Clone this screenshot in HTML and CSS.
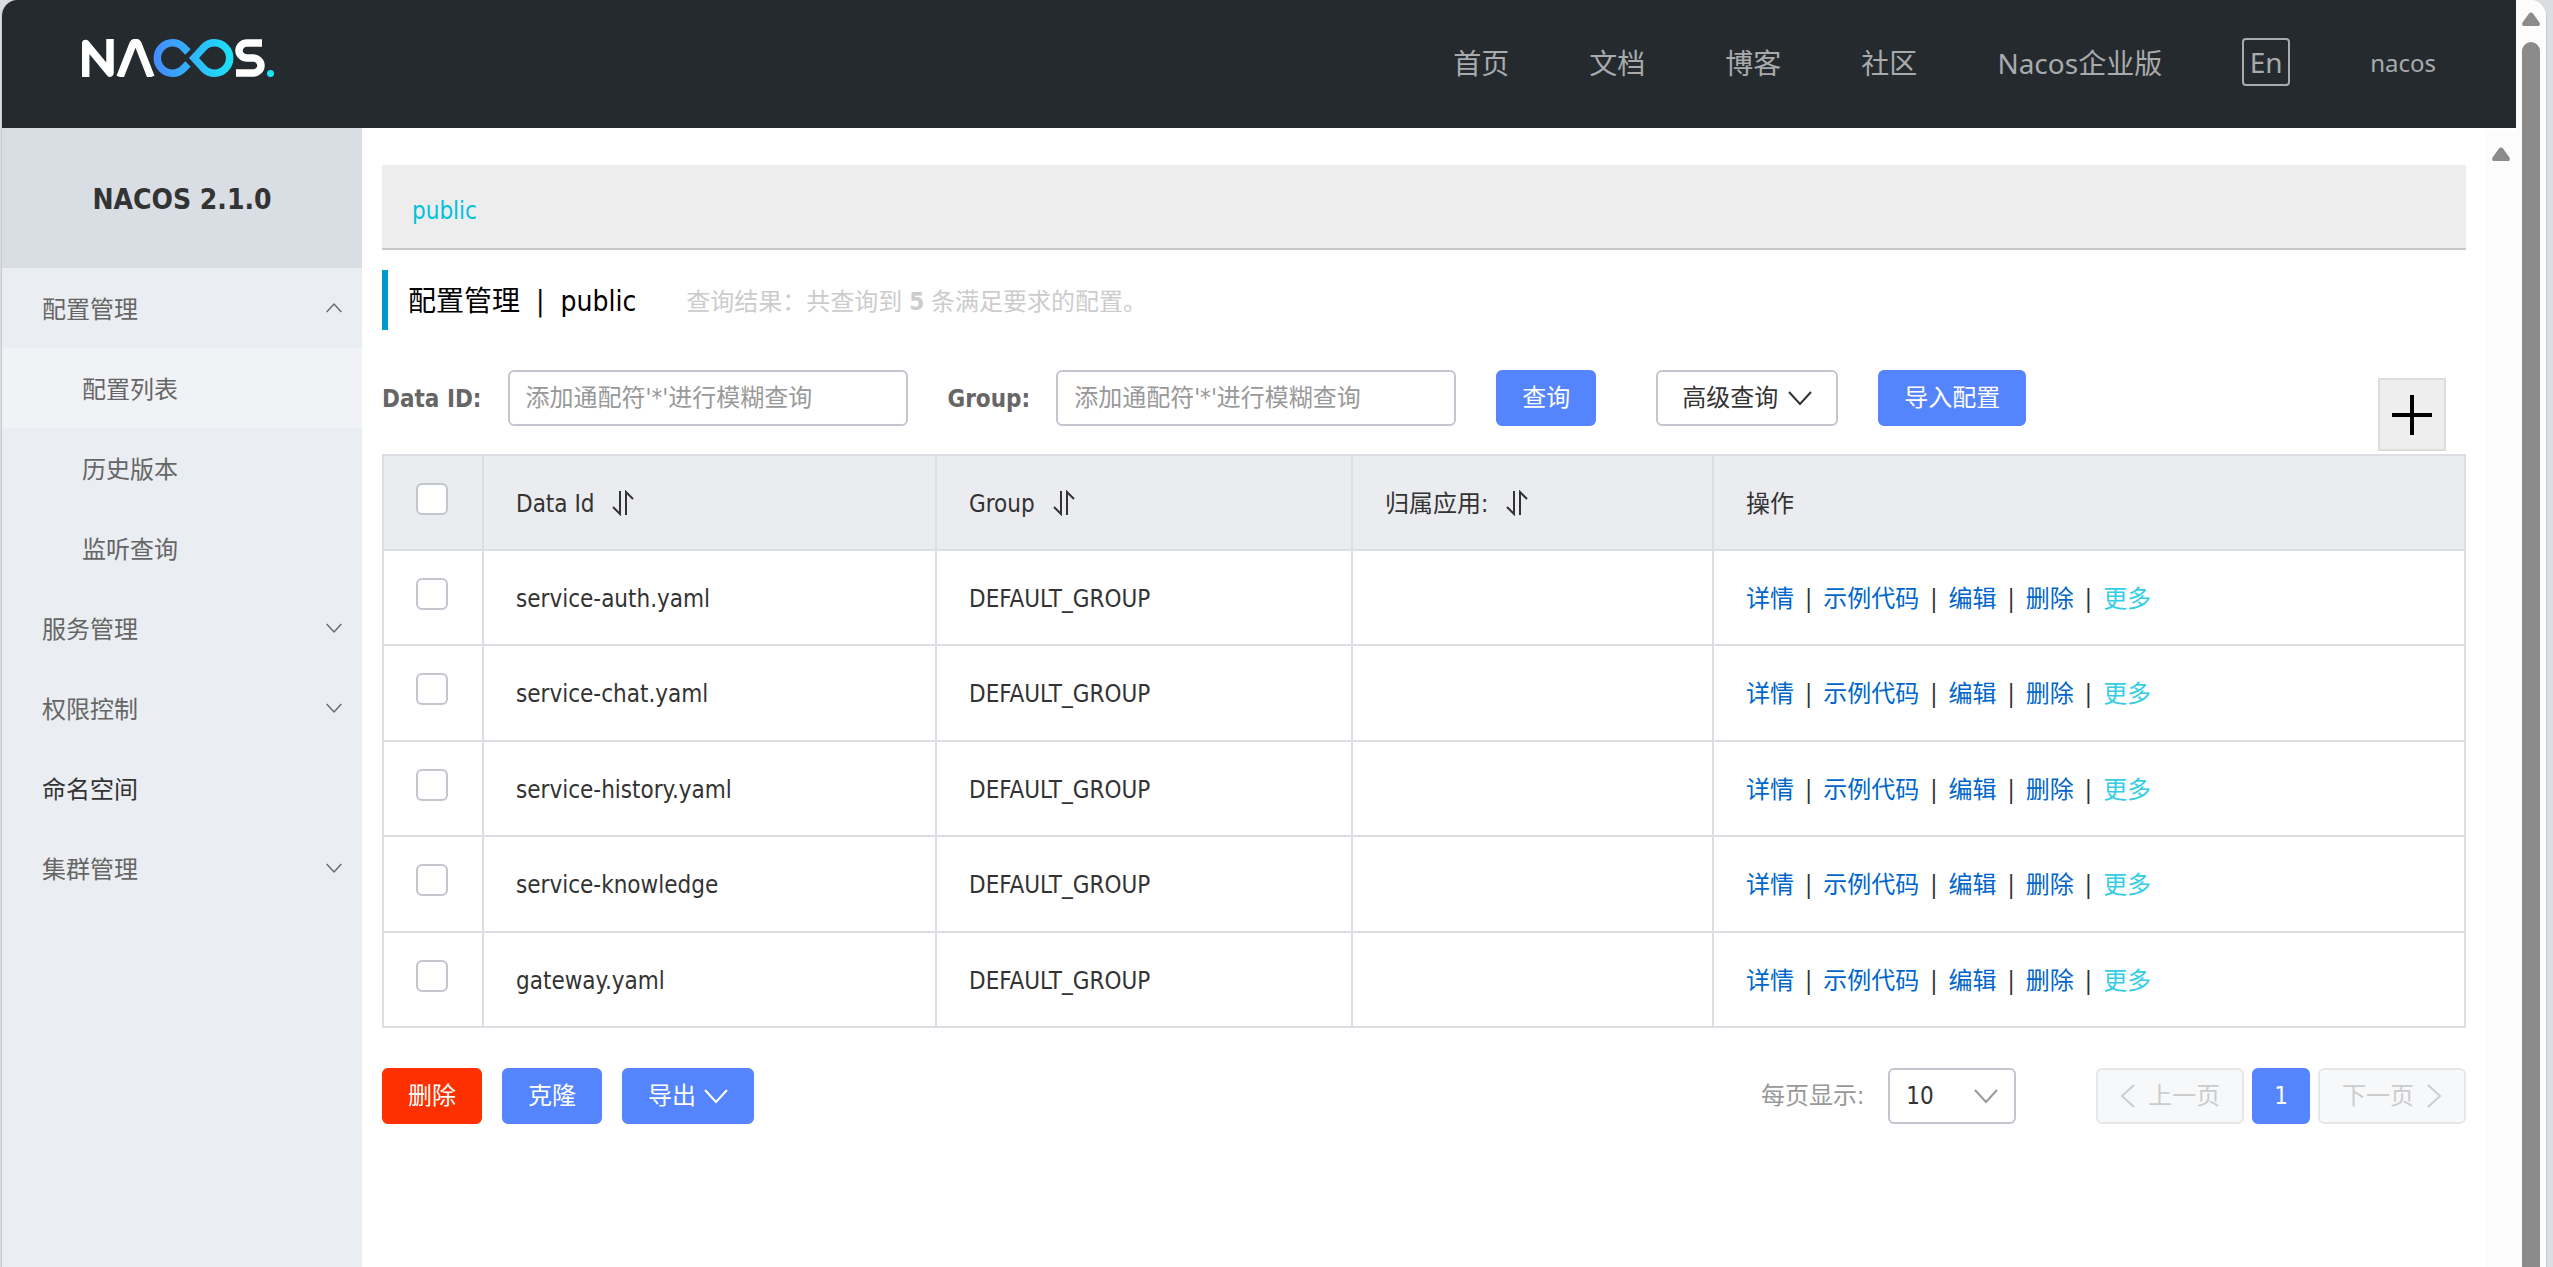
FILE: index.html
```html
<!DOCTYPE html>
<html lang="zh-CN">
<head>
    <meta charset="UTF-8">
    <meta name="viewport" content="width=device-width, initial-scale=1.0">
    <title>Nacos</title>
    <link rel="stylesheet" href="styles.css">
</head>
<body>
<svg class="icon-defs" aria-hidden="true">
    <symbol id="icon-down" viewBox="0 0 24 16"><path d="M1 2l11 12L23 2"/></symbol>
    <symbol id="icon-up" viewBox="0 0 24 16"><path d="M1 14L12 2l11 12"/></symbol>
    <symbol id="icon-left" viewBox="0 0 16 24"><path d="M14 1L2 12l12 11"/></symbol>
    <symbol id="icon-right" viewBox="0 0 16 24"><path d="M2 1l12 11L2 23"/></symbol>
    <symbol id="icon-sort" viewBox="0 0 22 26"><path d="M8 1v23L1 17M14 25V2l7 7"/></symbol>
    <symbol id="icon-arrow" viewBox="0 0 18 14"><path d="M7 1.500a2.500 2.500 0 0 1 4 0l6.500 9c.8 1.500.2 3.500-1.500 3.500H2C.3 14-.3 12 .5 10.500z"/></symbol>
</svg>
<div class="window">
    <div class="page">
        <header class="header">
            <a class="logo" href="#" aria-label="Nacos">
                <svg viewBox="0 0 192 38">
                    <defs>
                        <linearGradient id="loop" gradientUnits="userSpaceOnUse" x1="71" y1="0" x2="151" y2="0">
                            <stop offset="0" stop-color="#4589ff"/>
                            <stop offset="1" stop-color="#1be3f8"/>
                        </linearGradient>
                    </defs>
                    <g fill="none" stroke="#fff" stroke-width="7.500">
                        <path d="M3.700 38V4.500L28 34V0" stroke-linejoin="round"/>
                        <path d="M38 38L51 5q2.500-3.500 5 0L69 38"/>
                        <path d="M180 4h-15a8 7.500 0 0 0 0 15h6a8 7.500 0 0 1 0 15h-17"/>
                    </g>
                    <g fill="none" stroke="url(#loop)" stroke-width="7.500">
                        <path d="M106 13l-5-5a15.200 15.200 0 1 0 0 22l5-5"/>
                        <path d="M112 19l10-11a15.200 15.200 0 1 1 0 22z"/>
                    </g>
                    <circle cx="188.500" cy="34.500" r="3.500" fill="#1be3f8" stroke="none"/>
                </svg>
            </a>
            <nav class="nav">
                <a href="#">首页</a>
                <a href="#">文档</a>
                <a href="#">博客</a>
                <a href="#">社区</a>
                <a href="#">Nacos企业版</a>
                <button class="lang" type="button">En</button>
                <a class="user" href="#">nacos</a>
            </nav>
        </header>
        <div class="body">
            <aside class="sidebar">
                <h1 class="version">NACOS 2.1.0</h1>
                <nav class="menu">
                    <a class="menu-item" href="#">配置管理<svg class="icon"><use href="#icon-up"/></svg></a>
                    <a class="menu-item sub active" href="#">配置列表</a>
                    <a class="menu-item sub" href="#">历史版本</a>
                    <a class="menu-item sub" href="#">监听查询</a>
                    <a class="menu-item" href="#">服务管理<svg class="icon"><use href="#icon-down"/></svg></a>
                    <a class="menu-item" href="#">权限控制<svg class="icon"><use href="#icon-down"/></svg></a>
                    <a class="menu-item dark" href="#">命名空间</a>
                    <a class="menu-item" href="#">集群管理<svg class="icon"><use href="#icon-down"/></svg></a>
                </nav>
            </aside>
            <main class="main">
                <div class="namespace"><a href="#">public</a></div>
                <div class="title">
                    <h2>配置管理&nbsp; |&nbsp; public</h2>
                    <p>查询结果：共查询到 <strong>5</strong> 条满足要求的配置。</p>
                </div>
                <form class="search">
                    <label for="data-id">Data ID:</label>
                    <input class="field" id="data-id" type="text" placeholder="添加通配符'*'进行模糊查询">
                    <label for="group">Group:</label>
                    <input class="field" id="group" type="text" placeholder="添加通配符'*'进行模糊查询">
                    <button class="btn primary" type="button">查询</button>
                    <button class="btn normal" type="button">高级查询<svg class="icon"><use href="#icon-down"/></svg></button>
                    <button class="btn primary" type="button">导入配置</button>
                    <button class="add" type="button" aria-label="新建配置"><svg viewBox="0 0 40 40"><path d="M20 0v40M0 20h40"/></svg></button>
                </form>
                <table class="table">
                    <colgroup>
                        <col class="col-check"><col class="col-id"><col class="col-group"><col class="col-app"><col>
                    </colgroup>
                    <thead>
                        <tr>
                            <th><input type="checkbox" aria-label="全选"></th>
                            <th>Data Id<svg class="sort"><use href="#icon-sort"/></svg></th>
                            <th>Group<svg class="sort"><use href="#icon-sort"/></svg></th>
                            <th>归属应用:<svg class="sort"><use href="#icon-sort"/></svg></th>
                            <th>操作</th>
                        </tr>
                    </thead>
                    <tbody>
                        <tr>
                            <td><input type="checkbox" aria-label="service-auth.yaml"></td>
                            <td>service-auth.yaml</td>
                            <td>DEFAULT_GROUP</td>
                            <td></td>
                            <td class="actions"><a href="#">详情</a><i>|</i><a href="#">示例代码</a><i>|</i><a href="#">编辑</a><i>|</i><a href="#">删除</a><i>|</i><a class="more" href="#">更多</a></td>
                        </tr>
                        <tr>
                            <td><input type="checkbox" aria-label="service-chat.yaml"></td>
                            <td>service-chat.yaml</td>
                            <td>DEFAULT_GROUP</td>
                            <td></td>
                            <td class="actions"><a href="#">详情</a><i>|</i><a href="#">示例代码</a><i>|</i><a href="#">编辑</a><i>|</i><a href="#">删除</a><i>|</i><a class="more" href="#">更多</a></td>
                        </tr>
                        <tr>
                            <td><input type="checkbox" aria-label="service-history.yaml"></td>
                            <td>service-history.yaml</td>
                            <td>DEFAULT_GROUP</td>
                            <td></td>
                            <td class="actions"><a href="#">详情</a><i>|</i><a href="#">示例代码</a><i>|</i><a href="#">编辑</a><i>|</i><a href="#">删除</a><i>|</i><a class="more" href="#">更多</a></td>
                        </tr>
                        <tr>
                            <td><input type="checkbox" aria-label="service-knowledge"></td>
                            <td>service-knowledge</td>
                            <td>DEFAULT_GROUP</td>
                            <td></td>
                            <td class="actions"><a href="#">详情</a><i>|</i><a href="#">示例代码</a><i>|</i><a href="#">编辑</a><i>|</i><a href="#">删除</a><i>|</i><a class="more" href="#">更多</a></td>
                        </tr>
                        <tr>
                            <td><input type="checkbox" aria-label="gateway.yaml"></td>
                            <td>gateway.yaml</td>
                            <td>DEFAULT_GROUP</td>
                            <td></td>
                            <td class="actions"><a href="#">详情</a><i>|</i><a href="#">示例代码</a><i>|</i><a href="#">编辑</a><i>|</i><a href="#">删除</a><i>|</i><a class="more" href="#">更多</a></td>
                        </tr>
                    </tbody>
                </table>
                <div class="footer">
                    <div class="batch">
                        <button class="btn danger" type="button">删除</button>
                        <button class="btn primary" type="button">克隆</button>
                        <button class="btn primary" type="button">导出<svg class="icon"><use href="#icon-down"/></svg></button>
                    </div>
                    <div class="pagination">
                        <label for="page-size">每页显示:</label>
                        <div class="select">
                            <select id="page-size"><option>10</option><option>20</option><option>30</option></select>
                            <svg class="icon"><use href="#icon-down"/></svg>
                        </div>
                        <button class="btn pager" type="button" disabled><svg class="side"><use href="#icon-left"/></svg>上一页</button>
                        <button class="btn primary current" type="button">1</button>
                        <button class="btn pager" type="button" disabled>下一页<svg class="side"><use href="#icon-right"/></svg></button>
                    </div>
                </div>
            </main>
            <div class="inner-scroll"><svg class="arrow"><use href="#icon-arrow"/></svg></div>
        </div>
    </div>
    <div class="outer-scroll">
        <svg class="arrow"><use href="#icon-arrow"/></svg>
        <div class="thumb"></div>
    </div>
</div>
</body>
</html>
```
FILE: styles.css
```css
* {
    box-sizing: border-box;
}

body {
    margin: 0;
    background-color: #dcdde3;
    color: #333;
    font-family: "DejaVu Sans Condensed", "Noto Sans CJK SC", sans-serif;
    font-size: 24px;
    line-height: 36px;
}

a {
    color: inherit;
    text-decoration: none;
}

button,
input,
select {
    font: inherit;
    color: inherit;
}

h1,
h2,
p {
    margin: 0;
}

svg {
    flex: none;
    fill: none;
    stroke: currentColor;
    stroke-width: 2;
}

.icon-defs {
    display: none;
}

.icon {
    width: 24px;
    height: 16px;
}

.arrow {
    width: 18px;
    height: 14px;
    fill: #8b8b8b;
    stroke: none;
}

/* window frame */
.window {
    display: flex;
    height: 100vh;
    margin: 0 6px 0 1px;
    border: solid #c8cacd;
    border-width: 0 1px;
    border-radius: 16px 16px 0 0;
    background-color: #fff;
    overflow: hidden;
}

.page {
    flex: 1;
    min-width: 0;
    display: flex;
    flex-direction: column;
}

.outer-scroll {
    flex: none;
    width: 30px;
    display: flex;
    flex-direction: column;
    align-items: center;
    gap: 16px;
    padding-top: 12px;
    background-color: #fcfcfc;
}

.thumb {
    flex: 1;
    width: 18px;
    border-radius: 9px 9px 0 0;
    background-color: #8b8b8b;
}

.inner-scroll {
    flex: none;
    width: 30px;
    margin-top: 3px;
    padding-top: 15px;
    text-align: center;
    line-height: 14px;
    background-color: #fcfcfc;
}

/* header */
.header {
    flex: none;
    display: flex;
    justify-content: space-between;
    height: 128px;
    padding: 0 80px;
    background-color: #252a2f;
    color: #a8aaac;
    font-family: "Noto Sans", "Noto Sans CJK SC", sans-serif;
}

.logo {
    margin-top: 39px;
}

.logo svg {
    display: block;
    width: 192px;
    height: 38px;
}

.nav {
    display: flex;
    align-items: center;
    gap: 80px;
    padding-bottom: 4px;
    font-size: 28px;
}

.nav a {
    padding-top: 2px;
}

.lang {
    width: 48px;
    height: 48px;
    padding: 0;
    border: 2px solid #a8aaac;
    border-radius: 4px;
    background: none;
    line-height: 40px;
}

.nav .user {
    font-size: 24px;
}

.body {
    flex: 1;
    min-height: 0;
    display: flex;
}

/* sidebar */
.sidebar {
    flex: none;
    width: 360px;
    background-color: #eaedf1;
}

.version {
    height: 140px;
    background-color: #d9dde4;
    font-size: 28px;
    line-height: 143px;
    text-align: center;
}

.menu-item {
    display: flex;
    align-items: center;
    justify-content: space-between;
    height: 80px;
    padding: 4px 20px 0 40px;
    color: #666;
}

.menu-item .icon {
    width: 16px;
    height: 12px;
    margin-bottom: 4px;
}

.menu-item.sub {
    padding-left: 80px;
}

.menu-item.active {
    background-color: #f1f2f6;
}

.menu-item.dark {
    color: #333;
}

/* main */
.main {
    flex: 1;
    min-width: 0;
    padding: 37px 20px 0;
}

.namespace {
    height: 85px;
    padding-left: 30px;
    border-bottom: 2px solid #c8c8c8;
    background-color: #ededed;
    color: #00c1de;
    line-height: 92px;
}

.title {
    display: flex;
    align-items: center;
    gap: 50px;
    height: 60px;
    margin: 20px 0 40px;
    padding: 4px 0 0 20px;
    border-left: 6px solid #09c;
}

.title h2 {
    color: #000;
    font-size: 28px;
    font-weight: 400;
}

.title p {
    color: #ccc;
}

.search {
    display: flex;
    align-items: flex-start;
    margin-bottom: 3px;
}

.search label {
    margin-right: 26px;
    color: #666;
    font-weight: 700;
    line-height: 58px;
}

.field {
    width: 400px;
    height: 56px;
    margin-right: 40px;
    padding: 0 16px;
    border: 2px solid #c4c6cf;
    border-radius: 6px;
}

.field::placeholder {
    color: #999;
}

.btn {
    display: flex;
    align-items: center;
    justify-content: center;
    gap: 10px;
    height: 56px;
    padding: 0 24px;
    border: 2px solid transparent;
    border-radius: 6px;
    white-space: nowrap;
}

.primary {
    gap: 8px;
    border-color: #5584ff;
    background-color: #5584ff;
    color: #fff;
}

.danger {
    border-color: #ff3000;
    background-color: #ff3000;
    color: #fff;
}

.normal {
    margin: 0 40px 0 60px;
    border-color: #c4c6cf;
    background-color: #fff;
}

.search .btn,
.search .field {
    margin-bottom: 0;
}

.add {
    width: 68px;
    height: 73px;
    margin: 8px 20px 0 auto;
    padding: 0;
    border: 2px solid #ddd;
    background-color: #eee;
    color: #000;
}

.add svg {
    display: block;
    width: 40px;
    height: 40px;
    margin: auto;
    stroke-width: 4;
}

/* table */
.table {
    width: 100%;
    border-collapse: collapse;
    table-layout: fixed;
}

.col-check {
    width: 100px;
}

.col-id {
    width: 453px;
}

.col-group {
    width: 416px;
}

.col-app {
    width: 361px;
}

.table th,
.table td {
    height: 95px;
    padding: 2px 32px 0;
    border: 2px solid #dcdee3;
    font-weight: 400;
    text-align: left;
}

.table tr:nth-child(even) td {
    height: 96px;
}

.table th {
    background-color: #ebecf0;
}

.table input {
    appearance: none;
    display: block;
    width: 32px;
    height: 32px;
    margin: -10px 0 0;
    border: 2px solid #c4c6cf;
    border-radius: 6px;
    background-color: #fff;
}

.sort {
    width: 22px;
    height: 26px;
    margin-left: 18px;
    vertical-align: -4px;
}

.actions a {
    color: #06c;
}

.actions .more {
    color: #33cde5;
}

.actions i {
    margin: 0 11px;
    font-style: normal;
}

/* footer */
.footer {
    display: flex;
    justify-content: space-between;
    margin-top: 40px;
}

.batch {
    display: flex;
    gap: 20px;
}

.pagination {
    display: flex;
    align-items: center;
    gap: 8px;
}

.pagination label {
    margin-right: 16px;
    color: #999;
}

.select {
    position: relative;
    margin-right: 72px;
}

.select select {
    appearance: none;
    display: block;
    width: 128px;
    height: 56px;
    padding: 0 16px;
    border: 2px solid #c4c6cf;
    border-radius: 6px;
    background-color: #fff;
}

.select .icon {
    position: absolute;
    top: 20px;
    right: 18px;
    color: #999;
    pointer-events: none;
}

.pager {
    gap: 12px;
    padding: 0 22px;
    border-color: #e6e7eb;
    background-color: #f7f8fa;
    color: #ccc;
}

.current {
    padding: 0 20px;
}

.side {
    width: 16px;
    height: 24px;
}
```
